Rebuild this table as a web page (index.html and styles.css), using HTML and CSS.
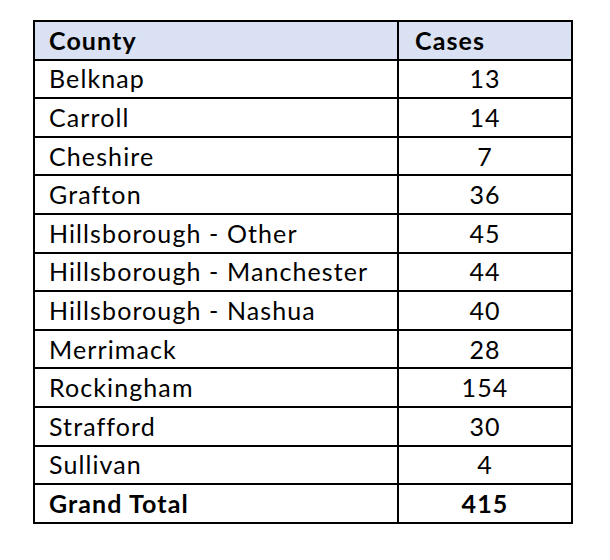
FILE: index.html
```html
<!DOCTYPE html>
<html>
<head>
<meta charset="utf-8">
<link rel="stylesheet" href="styles.css">
</head>
<body>
<table class="cases">
  <thead>
    <tr><th class="county">County</th><th class="num head">Cases</th></tr>
  </thead>
  <tbody>
    <tr><td>Belknap</td><td class="num">13</td></tr>
    <tr><td>Carroll</td><td class="num">14</td></tr>
    <tr><td>Cheshire</td><td class="num">7</td></tr>
    <tr><td>Grafton</td><td class="num">36</td></tr>
    <tr><td>Hillsborough - Other</td><td class="num">45</td></tr>
    <tr><td>Hillsborough - Manchester</td><td class="num">44</td></tr>
    <tr><td>Hillsborough - Nashua</td><td class="num">40</td></tr>
    <tr><td>Merrimack</td><td class="num">28</td></tr>
    <tr><td>Rockingham</td><td class="num">154</td></tr>
    <tr><td>Strafford</td><td class="num">30</td></tr>
    <tr><td>Sullivan</td><td class="num">4</td></tr>
    <tr class="total"><td>Grand Total</td><td class="num">415</td></tr>
  </tbody>
</table>
</body>
</html>
```
FILE: styles.css
```css
html, body {
  margin: 0;
  padding: 0;
  background: #ffffff;
}
body {
  padding: 20px 0 0 33px;
  font-family: "Lato", "Open Sans", sans-serif;
  color: #000;
}
.cases {
  border-collapse: collapse;
  width: 540px;
  font-size: 25px;
  letter-spacing: 1.1px;
}
.cases th,
.cases td {
  border: 2px solid #000;
  height: 38.6px;
  padding: 0 10px 0 14px;
  box-sizing: border-box;
  text-align: left;
  line-height: 1;
  vertical-align: middle;
}
.cases th {
  background: #d9e1f2;
  font-weight: bold;
}
.cases td:first-child,
.cases th:first-child {
  width: 364px;
}
.cases td.num {
  text-align: center;
  padding: 0;
}
.cases th.head {
  text-align: left;
  padding-left: 16px;
}
.total td {
  font-weight: bold;
}
```
